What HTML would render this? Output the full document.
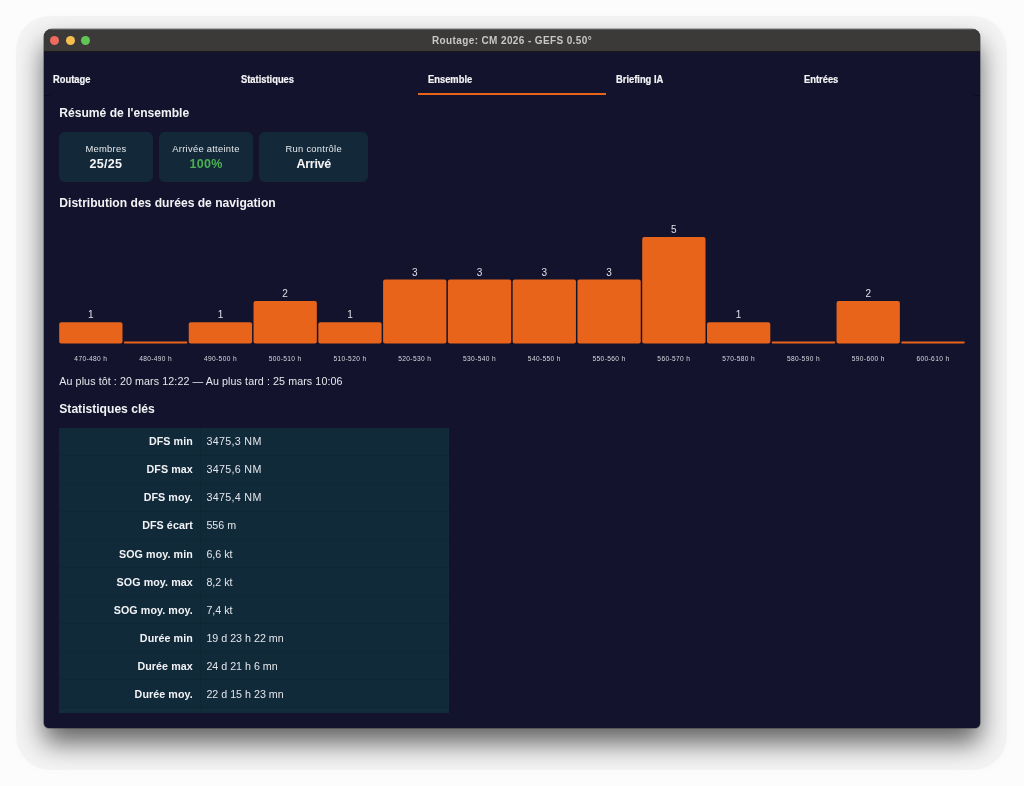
<!DOCTYPE html>
<html lang="fr">
<head>
<meta charset="utf-8">
<title>Routage: CM 2026 - GEFS 0.50°</title>
<style>
*{box-sizing:border-box;margin:0;padding:0}
html,body{width:1024px;height:786px;overflow:hidden;background:#fcfcfc;font-family:"Liberation Sans",sans-serif;}
body{position:relative}
.halo{position:absolute;left:16px;top:16px;width:991px;height:754px;border-radius:34px;background:rgba(0,0,0,0.03)}
.win{will-change:transform;position:absolute;left:44px;top:29px;width:936px;height:698.5px;border-radius:8px 8px 5px 5px;background:#13132d;box-shadow:0 15px 27px rgba(0,0,0,0.6),0 0 0 0.6px rgba(30,30,50,0.55);overflow:hidden}
.tbar{position:absolute;left:0;top:0;width:100%;height:22.6px;background:#3b3a39;border-top:1px solid #5b5a58;border-bottom:1px solid #17171c}
.tl{position:absolute;top:5.9px;width:9.4px;height:9.4px;border-radius:50%}
.tl.r{left:5.8px;background:#ec6a5e}
.tl.y{left:21.5px;background:#f4bf4f}
.tl.g{left:37.1px;background:#61c554}
.title{position:absolute;left:0;right:0;top:-.2px;height:22px;line-height:22px;text-align:center;font-weight:bold;font-size:10px;letter-spacing:.38px;color:#c9c6c3;white-space:nowrap}
.abs{position:absolute;white-space:nowrap}
.tab{position:absolute;top:42.5px;font-weight:bold;font-size:10.4px;color:#f4f4f6;-webkit-text-stroke:.2px #f4f4f6;line-height:16px;transform-origin:0 50%;transform:scaleX(.9);white-space:nowrap}
.tabline{position:absolute;top:66px;height:1.2px;width:6px;background:#0c0c20}
.ul{position:absolute;left:374.3px;top:64.4px;width:187.3px;height:2px;background:#e8641b}
.h{position:absolute;left:15.3px;font-weight:bold;font-size:12.1px;color:#f2f2f5;line-height:16px;white-space:nowrap}
.card{position:absolute;top:103.2px;height:49.4px;border-radius:6px;background:#13293a;text-align:center;color:#e6e8ec}
.card .l{position:absolute;left:0;right:0;top:11px;font-size:9.4px;letter-spacing:.27px;line-height:12px;white-space:nowrap}
.card .v{position:absolute;left:0;right:0;top:24.1px;font-size:12.5px;font-weight:bold;line-height:16px;color:#f4f4f6;white-space:nowrap}
.bars{position:absolute;left:0;top:0}
.cnt{position:absolute;width:63.3px;text-align:center;font-size:10px;line-height:12px;color:#dfe0e6}
.bin{position:absolute;width:63.3px;top:323.6px;text-align:center;font-size:6.6px;letter-spacing:.36px;line-height:12px;color:#d8d9e0;white-space:nowrap}
.info{position:absolute;left:15.3px;top:344.0px;font-size:10.7px;letter-spacing:.09px;line-height:16px;color:#e6e7ec;white-space:nowrap}
.tbl{position:absolute;left:15px;top:398.7px;width:390px;height:285px;background:#112a3a}
.row{position:absolute;left:0;width:390px;height:28.08px;border-bottom:1px solid rgba(0,0,0,0.07)}
.k{position:absolute;left:0;width:141px;margin-top:-.5px;letter-spacing:.08px;top:0;height:28px;line-height:28px;padding-right:7.2px;text-align:right;font-weight:bold;font-size:10.7px;color:#f2f3f6;white-space:nowrap}
.vv{position:absolute;left:147.4px;top:-.5px;height:28px;line-height:28px;font-size:10.7px;color:#e3e5ea;white-space:nowrap}
.tfoot{position:absolute;left:0;top:281.3px;width:390px;height:3.7px;background:#122c3b}
.tright{position:absolute;right:0;top:0;width:1px;height:285px;background:#122c3b}
.vline{position:absolute;left:140.5px;top:0;width:1px;height:285px;background:rgba(0,0,0,0.07)}
</style>
</head>
<body>
<div class="halo"></div>
<div class="win">
  <div class="tbar">
    <div class="tl r"></div><div class="tl y"></div><div class="tl g"></div>
    <div class="title">Routage: CM 2026 - GEFS 0.50°</div>
  </div>
  <div class="tabline" style="left:0"></div><div class="tabline" style="right:0"></div>
  <div class="tab" style="left:9.4px">Routage</div>
  <div class="tab" style="left:196.5px">Statistiques</div>
  <div class="tab" style="left:383.9px">Ensemble</div>
  <div class="tab" style="left:572px">Briefing IA</div>
  <div class="tab" style="left:759.5px">Entrées</div>
  <div class="ul"></div>

  <div class="h" style="top:75.8px">Résumé de l'ensemble</div>
  <div class="card" style="left:14.9px;width:94px"><div class="l">Membres</div><div class="v" style="letter-spacing:.3px">25/25</div></div>
  <div class="card" style="left:115.2px;width:93.6px"><div class="l">Arrivée atteinte</div><div class="v" style="color:#4caf50;letter-spacing:.3px">100%</div></div>
  <div class="card" style="left:215.1px;width:109.3px"><div class="l">Run contrôle</div><div class="v" style="letter-spacing:-.3px">Arrivé</div></div>

  <div class="h" style="top:165.8px">Distribution des durées de navigation</div>
  <div id="chart">
    <svg class="bars" width="936" height="330" viewBox="0 0 936 330"><g fill="#e8641b">
      <rect x="15.20" y="293.14" width="63.3" height="21.26" rx="2" ry="2"/>
      <rect x="79.98" y="312.60" width="63.3" height="1.8" rx="0.6" ry="0.6"/>
      <rect x="144.76" y="293.14" width="63.3" height="21.26" rx="2" ry="2"/>
      <rect x="209.54" y="271.88" width="63.3" height="42.52" rx="2" ry="2"/>
      <rect x="274.32" y="293.14" width="63.3" height="21.26" rx="2" ry="2"/>
      <rect x="339.10" y="250.62" width="63.3" height="63.78" rx="2" ry="2"/>
      <rect x="403.88" y="250.62" width="63.3" height="63.78" rx="2" ry="2"/>
      <rect x="468.66" y="250.62" width="63.3" height="63.78" rx="2" ry="2"/>
      <rect x="533.44" y="250.62" width="63.3" height="63.78" rx="2" ry="2"/>
      <rect x="598.22" y="208.10" width="63.3" height="106.30" rx="2" ry="2"/>
      <rect x="663.00" y="293.14" width="63.3" height="21.26" rx="2" ry="2"/>
      <rect x="727.78" y="312.60" width="63.3" height="1.8" rx="0.6" ry="0.6"/>
      <rect x="792.56" y="271.88" width="63.3" height="42.52" rx="2" ry="2"/>
      <rect x="857.34" y="312.60" width="63.3" height="1.8" rx="0.6" ry="0.6"/>
    </g></svg>
    <div class="cnt" style="left:15.2px;top:280.4px">1</div>
    <div class="bin" style="left:15.2px">470-480 h</div>
    <div class="bin" style="left:80.0px">480-490 h</div>
    <div class="cnt" style="left:144.8px;top:280.4px">1</div>
    <div class="bin" style="left:144.8px">490-500 h</div>
    <div class="cnt" style="left:209.5px;top:259.2px">2</div>
    <div class="bin" style="left:209.5px">500-510 h</div>
    <div class="cnt" style="left:274.3px;top:280.4px">1</div>
    <div class="bin" style="left:274.3px">510-520 h</div>
    <div class="cnt" style="left:339.1px;top:237.9px">3</div>
    <div class="bin" style="left:339.1px">520-530 h</div>
    <div class="cnt" style="left:403.9px;top:237.9px">3</div>
    <div class="bin" style="left:403.9px">530-540 h</div>
    <div class="cnt" style="left:468.7px;top:237.9px">3</div>
    <div class="bin" style="left:468.7px">540-550 h</div>
    <div class="cnt" style="left:533.4px;top:237.9px">3</div>
    <div class="bin" style="left:533.4px">550-560 h</div>
    <div class="cnt" style="left:598.2px;top:195.4px">5</div>
    <div class="bin" style="left:598.2px">560-570 h</div>
    <div class="cnt" style="left:663.0px;top:280.4px">1</div>
    <div class="bin" style="left:663.0px">570-580 h</div>
    <div class="bin" style="left:727.8px">580-590 h</div>
    <div class="cnt" style="left:792.6px;top:259.2px">2</div>
    <div class="bin" style="left:792.6px">590-600 h</div>
    <div class="bin" style="left:857.3px">600-610 h</div>
  </div>
  <div class="info">Au plus tôt : 20 mars 12:22 — Au plus tard : 25 mars 10:06</div>

  <div class="h" style="top:371.6px">Statistiques clés</div>
  <div class="tbl">
    <div class="vline"></div><div class="tfoot"></div><div class="tright"></div>
    <div class="row" style="top:0"><div class="k">DFS min</div><div class="vv" style="letter-spacing:.33px">3475,3 NM</div></div>
    <div class="row" style="top:28.08px"><div class="k">DFS max</div><div class="vv" style="letter-spacing:.33px">3475,6 NM</div></div>
    <div class="row" style="top:56.16px"><div class="k">DFS moy.</div><div class="vv" style="letter-spacing:.33px">3475,4 NM</div></div>
    <div class="row" style="top:84.24px"><div class="k">DFS écart</div><div class="vv">556 m</div></div>
    <div class="row" style="top:112.32px"><div class="k">SOG moy. min</div><div class="vv">6,6 kt</div></div>
    <div class="row" style="top:140.4px"><div class="k">SOG moy. max</div><div class="vv">8,2 kt</div></div>
    <div class="row" style="top:168.48px"><div class="k">SOG moy. moy.</div><div class="vv">7,4 kt</div></div>
    <div class="row" style="top:196.56px"><div class="k">Durée min</div><div class="vv">19 d 23 h 22 mn</div></div>
    <div class="row" style="top:224.64px"><div class="k">Durée max</div><div class="vv">24 d 21 h 6 mn</div></div>
    <div class="row" style="top:252.72px"><div class="k">Durée moy.</div><div class="vv">22 d 15 h 23 mn</div></div>
  </div>
</div>
</body>
</html>
